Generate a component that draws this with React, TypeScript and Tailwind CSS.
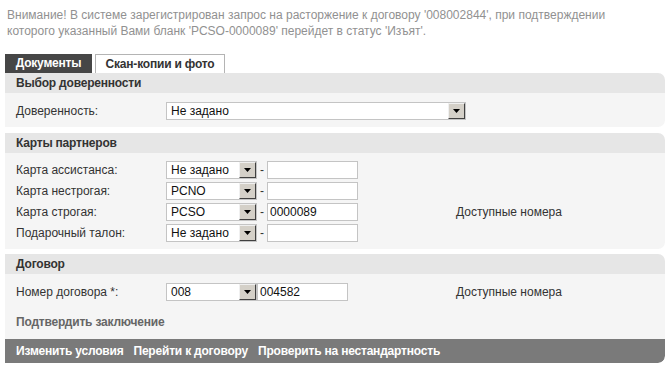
import React from "react";

const Arrow = () => (
  <span className="w-[17px] h-full flex items-center justify-center bg-[#d4d0c8] border-l border-t border-l-[#f0f0f0] border-t-[#f0f0f0] border-r border-b border-r-[#404040] border-b-[#404040]">
    <svg width="7" height="4" viewBox="0 0 7 4">
      <path d="M0 0h7L3.5 4z" fill="#000" />
    </svg>
  </span>
);

const Select = ({ value, w }: { value: string; w: string }) => (
  <div className={`${w} h-[18px] shrink-0 flex items-stretch bg-white border border-[#c4c4c4]`}>
    <span className="flex-1 pl-[4px] leading-[16px] text-[#111] text-[12px]">{value}</span>
    <Arrow />
  </div>
);

const Input = ({ value = "", w }: { value?: string; w: string }) => (
  <div className={`${w} h-[18px] shrink-0 bg-white border border-[#c4c4c4] pl-[2px] leading-[16px] text-[#111]`}>
    {value}
  </div>
);

const Header = ({ title }: { title: string }) => (
  <div className="h-[20px] bg-[#e6e6e6] pl-[11px] leading-[20px] font-bold tracking-[-0.2px] text-[#333]">{title}</div>
);

const Panel = ({ title, children }: { title: string; children: React.ReactNode }) => (
  <div className="rounded-r-[7px] overflow-hidden">
    <Header title={title} />
    <div className="bg-[#f5f5f5]">{children}</div>
  </div>
);

const Row = ({ label, children, extra }: { label: string; children: React.ReactNode; extra?: string }) => (
  <div className="flex items-center h-[21px]">
    <span className="w-[161px] pl-[11px] text-[#333]">{label}</span>
    <div className="flex items-center w-[290px]">{children}</div>
    {extra && <span className="text-[#333]">{extra}</span>}
  </div>
);

const CardRow = ({ label, sel, num, extra }: { label: string; sel: string; num?: string; extra?: string }) => (
  <Row label={label} extra={extra}>
    <Select value={sel} w="w-[91px]" />
    <span className="w-[10px] text-center text-[#333]">-</span>
    <Input value={num} w="w-[91px]" />
  </Row>
);

export default function App() {
  return (
    <div className="w-[667px] h-[365px] bg-white font-['Liberation_Sans',Arial,sans-serif] text-[12px] overflow-hidden">
      <p className="pl-[7px] pt-[7px] pr-[16px] leading-[16px] text-[#919191]">
        Внимание! В системе зарегистрирован запрос на расторжение к договору '008002844', при подтверждении
        которого указанный Вами бланк 'PCSO-0000089' перейдет в статус 'Изъят'.
      </p>
      <div className="ml-[5px] mr-[2px] mt-[14px]">
        <div className="flex items-end h-[20px] gap-[3px]">
          <div className="h-[19px] w-[87px] bg-[#464646] text-white font-bold tracking-[-0.2px] leading-[19px] text-center">
            Документы
          </div>
          <div className="h-[19px] w-[130px] bg-white border border-b-0 border-[#b4b4b4] text-[#333] font-bold tracking-[-0.2px] leading-[18px] text-center">
            Скан-копии и фото
          </div>
        </div>
        <Panel title="Выбор доверенности">
          <div className="pt-[7px] pb-[6px]">
            <Row label="Доверенность:">
              <Select value="Не задано" w="w-[300px]" />
            </Row>
          </div>
        </Panel>
        <div className="h-[6px]" />
        <Panel title="Карты партнеров">
          <div className="pt-[6px] pb-[6px]">
            <CardRow label="Карта ассистанса:" sel="Не задано" />
            <CardRow label="Карта нестрогая:" sel="PCNO" />
            <CardRow label="Карта строгая:" sel="PCSO" num="0000089" extra="Доступные номера" />
            <CardRow label="Подарочный талон:" sel="Не задано" />
          </div>
        </Panel>
        <div className="h-[5px]" />
        <div className="rounded-r-[7px] overflow-hidden">
          <Header title="Договор" />
          <div className="bg-[#f5f5f5] pt-[7px]">
            <Row label="Номер договора *:" extra="Доступные номера">
              <Select value="008" w="w-[91px]" />
              <Input value="004582" w="w-[91px]" />
            </Row>
            <div className="pl-[11px] pt-[10px] h-[37px] leading-[20px] font-bold tracking-[-0.2px] text-[#666]">
              Подтвердить заключение
            </div>
          </div>
          <div className="h-[24px] bg-[#7a7a7a] pl-[11px] leading-[24px] font-bold tracking-[-0.2px] text-white flex gap-[10px] rounded-br-[7px]">
            <span>Изменить условия</span>
            <span>Перейти к договору</span>
            <span>Проверить на нестандартность</span>
          </div>
        </div>
      </div>
    </div>
  );
}
